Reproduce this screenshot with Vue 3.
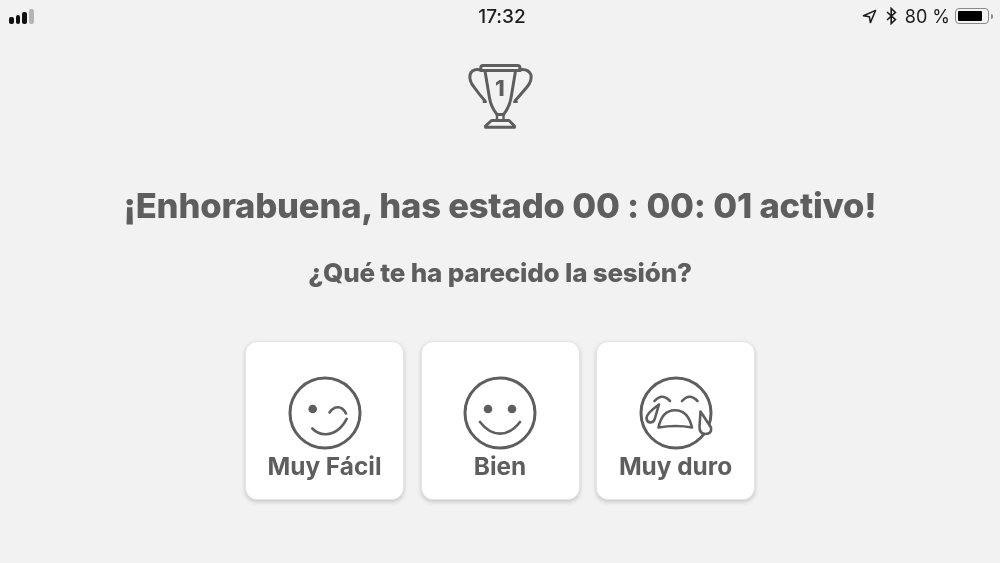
<script setup>
const options = [
  { id: 'easy', label: 'Muy Fácil' },
  { id: 'good', label: 'Bien' },
  { id: 'hard', label: 'Muy duro' }
];
</script>

<template>
  <div class="screen">
    <header class="status-bar">
      <div class="signal">
        <span class="bar b1"></span>
        <span class="bar b2"></span>
        <span class="bar b3"></span>
        <span class="bar b4"></span>
      </div>
      <div class="clock">17:32</div>
      <div class="status-right">
        <svg class="arrow" width="15" height="15" viewBox="0 0 15 15">
          <path d="M13.6 1.4 1.4 6.8 7.4 7.8 8.4 13.6Z" fill="none" stroke="#1c1c1c" stroke-width="1.5" stroke-linejoin="round" />
        </svg>
        <svg class="bluetooth" width="11" height="18" viewBox="0 0 11 18">
          <path d="M1 5 9.4 12.6 5.2 16.6V1.4L9.4 5.4 1 13" fill="none" stroke="#1c1c1c" stroke-width="1.6" />
        </svg>
        <span class="percent">80 %</span>
        <div class="battery">
          <div class="battery-fill"></div>
        </div>
        <span class="battery-nub"></span>
      </div>
    </header>

    <main class="content">
      <svg class="trophy" width="100" height="80" viewBox="0 0 100 80" fill="none" stroke="#5e5e5e" stroke-width="3" stroke-linecap="round" stroke-linejoin="round">
        <path d="M33 10.5H67.5Q70 10.5 70 13V15.6H30.8V13Q30.8 10.5 33 10.5Z" />
        <path d="M35 16 39.5 43Q41 52 47 59.5H53.5Q59.5 52 61 43L65.5 16" />
        <path d="M31 15Q22 13 20 20 19 26 24 32 29 39 35 46" />
        <path d="M69 15Q78 13 81 20 82 26 77 32 71 39 65 46" />
        <path d="M33.5 47H36M64 47H67" stroke-width="2" />
        <path d="M47 60V65M53.5 60V65" stroke-width="2.4" />
        <path d="M41.5 65.5H59L64.5 71V72.3H35.5V71Z" />
        <text x="49.8" y="40.5" class="trophy-rank">1</text>
      </svg>

      <h1 class="headline">¡Enhorabuena, has estado 00 : 00: 01 activo!</h1>
      <h2 class="question">¿Qué te ha parecido la sesión?</h2>

      <div class="options">
        <button v-for="option in options" :key="option.id" class="option" type="button">
          <svg class="face" width="76" height="76" viewBox="-38 -38 76 76" fill="none" stroke="#5e5e5e" stroke-width="3" stroke-linecap="round" stroke-linejoin="round">
            <circle r="35" />
            <template v-if="option.id === 'easy'">
              <circle cx="-12.3" cy="-4" r="4.3" fill="#5e5e5e" stroke="none" />
              <path d="M4.5-.5Q8-5.8 13-5.8 18-5.8 21 .5" stroke-width="2.6" />
              <path d="M-12.7 15.5Q-7 21.5 1 21.2 14 20.5 21.7 5.8" stroke-width="2.6" />
            </template>
            <template v-else-if="option.id === 'good'">
              <circle cx="-12" cy="-4" r="4.3" fill="#5e5e5e" stroke="none" />
              <circle cx="12" cy="-4" r="4.3" fill="#5e5e5e" stroke="none" />
              <path d="M-20 9Q-11 20.6 0 20.6 11 20.6 20 9" stroke-width="2.6" />
            </template>
            <template v-else>
              <path d="M-21.5-12Q-14-20.5-6-12M6-12Q13.5-20.5 21.5-12" stroke-width="2.6" />
              <path d="M-17-8.5Q-29 0-29.5 5-29.5 9-26 9.5-22 9.5-21 5Z" stroke-width="2.6" />
              <path d="M-17.5 14.5Q-14-2.8-1-2.8 12-2.8 16 14.5 0 11.5-17.5 14.5Z" stroke-width="2.6" />
              <path d="M24.5-1.5 35 14.5Q36 21 29.5 21 23.5 21 23.5 14Z" fill="#fff" stroke-width="2.6" />
            </template>
          </svg>
          <span class="option-label">{{ option.label }}</span>
        </button>
      </div>
    </main>
  </div>
</template>

<style scoped>
.screen {
  width: 1000px;
  height: 563px;
  overflow: hidden;
  background: #f2f2f2;
  color: #5e5e5e;
  font-family: Inter, "Liberation Sans", sans-serif;
  font-feature-settings: "calt" 0;
  display: flex;
  flex-direction: column;
  will-change: transform;
}

.status-bar {
  height: 32px;
  display: grid;
  grid-template-columns: 1fr auto 1fr;
  align-items: center;
  color: #1c1c1c;
}

.signal {
  display: flex;
  align-items: flex-end;
  gap: 2px;
  height: 15px;
  padding-left: 9px;
}

.bar {
  width: 4.7px;
  border-radius: 2px;
  background: #111;
}

.b1 { height: 7px; }
.b2 { height: 9px; }
.b3 { height: 12px; }
.b4 { height: 15px; background: #b5b5b5; }

.clock {
  font-size: 19px;
  font-weight: 500;
  padding-left: 4px;
}

.status-right {
  display: flex;
  align-items: center;
  justify-content: flex-end;
  padding-right: 7px;
}

.bluetooth {
  margin-left: 9px;
}

.percent {
  margin-left: 8px;
  font-size: 18px;
  font-weight: 400;
}

.battery {
  margin-left: 5px;
  width: 34px;
  height: 16px;
  box-sizing: border-box;
  border: 1.5px solid #8a8a8a;
  border-radius: 4px;
  padding: 2px;
}

.battery-fill {
  width: 24px;
  height: 100%;
  background: #000;
  border-radius: 1px;
}

.battery-nub {
  width: 2px;
  height: 5px;
  margin-left: 2px;
  background: #8a8a8a;
  border-radius: 0 2px 2px 0;
}

.content {
  display: flex;
  flex-direction: column;
  align-items: center;
  padding-top: 23px;
}

.trophy-rank {
  font-family: Inter, "Liberation Sans", sans-serif;
  font-size: 22px;
  font-weight: 800;
  fill: #5e5e5e;
  stroke: none;
  text-anchor: middle;
}

.headline {
  margin: 49px 0 0;
  font-size: 34.6px;
  line-height: 42px;
  font-weight: 800;
  letter-spacing: -0.19px;
  white-space: nowrap;
}

.question {
  margin: 32px 0 0;
  font-size: 26px;
  line-height: 30px;
  font-weight: 800;
  letter-spacing: -0.2px;
  white-space: nowrap;
}

.options {
  display: flex;
  gap: 16.5px;
  margin-top: 53px;
}

.option {
  width: 159px;
  height: 159px;
  box-sizing: border-box;
  padding: 33px 0 0;
  border: 1px solid #e4e4e4;
  border-radius: 12px;
  background: #fff;
  box-shadow: 0 2px 4px rgba(0, 0, 0, 0.18);
  color: inherit;
  font-family: inherit;
  font-feature-settings: inherit;
  display: flex;
  flex-direction: column;
  align-items: center;
}

.option-label {
  font-size: 24.4px;
  line-height: 30px;
  font-weight: 700;
  white-space: nowrap;
}
</style>
